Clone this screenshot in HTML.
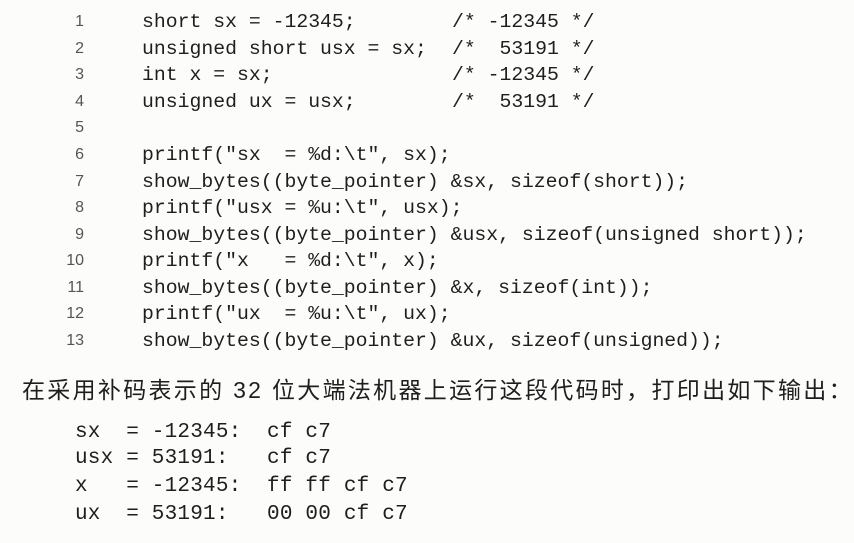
<!DOCTYPE html>
<html><head><meta charset="utf-8"><style>
html,body{margin:0;padding:0;width:854px;height:543px;background:#fcfcfb;overflow:hidden;position:relative}
.l{position:absolute;white-space:pre;font-family:"Liberation Mono",monospace;font-size:19.8px;color:#1e1e1e;line-height:24px}
.n{position:absolute;font-family:"Liberation Sans",sans-serif;font-size:16px;color:#555;width:30px;text-align:right;line-height:24px}
.c{position:absolute;left:452px;white-space:pre;font-family:"Liberation Mono",monospace;font-size:19.8px;color:#1e1e1e;line-height:24px}
.o{position:absolute;left:75px;white-space:pre;font-family:"Liberation Mono",monospace;font-size:21px;color:#1e1e1e;line-height:24px;letter-spacing:0.2px}
.zh{position:absolute;left:22px;top:376px;white-space:pre;font-family:"Liberation Sans","Noto Sans CJK SC",sans-serif;font-size:23px;letter-spacing:2.3px;color:#1e1e1e;line-height:28px}
</style></head><body>
<div class="n" style="left:54px;top:10px">1</div><div class="l" style="left:142px;top:10px">short sx = -12345;</div><div class="c" style="top:10px">/* -12345 */</div>
<div class="n" style="left:54px;top:37px">2</div><div class="l" style="left:142px;top:37px">unsigned short usx = sx;</div><div class="c" style="top:37px">/*  53191 */</div>
<div class="n" style="left:54px;top:63px">3</div><div class="l" style="left:142px;top:63px">int x = sx;</div><div class="c" style="top:63px">/* -12345 */</div>
<div class="n" style="left:54px;top:90px">4</div><div class="l" style="left:142px;top:90px">unsigned ux = usx;</div><div class="c" style="top:90px">/*  53191 */</div>
<div class="n" style="left:54px;top:116px">5</div>
<div class="n" style="left:54px;top:143px">6</div><div class="l" style="left:142px;top:143px">printf("sx  = %d:\t", sx);</div>
<div class="n" style="left:54px;top:170px">7</div><div class="l" style="left:142px;top:170px">show_bytes((byte_pointer) &amp;sx, sizeof(short));</div>
<div class="n" style="left:54px;top:196px">8</div><div class="l" style="left:142px;top:196px">printf("usx = %u:\t", usx);</div>
<div class="n" style="left:54px;top:223px">9</div><div class="l" style="left:142px;top:223px">show_bytes((byte_pointer) &amp;usx, sizeof(unsigned short));</div>
<div class="n" style="left:54px;top:249px">10</div><div class="l" style="left:142px;top:249px">printf("x   = %d:\t", x);</div>
<div class="n" style="left:54px;top:276px">11</div><div class="l" style="left:142px;top:276px">show_bytes((byte_pointer) &amp;x, sizeof(int));</div>
<div class="n" style="left:54px;top:302px">12</div><div class="l" style="left:142px;top:302px">printf("ux  = %u:\t", ux);</div>
<div class="n" style="left:54px;top:329px">13</div><div class="l" style="left:142px;top:329px">show_bytes((byte_pointer) &amp;ux, sizeof(unsigned));</div>
<div class="zh">在采用补码表示的 32 位大端法机器上运行这段代码时，打印出如下输出：</div>
<div class="o" style="top:421px">sx  = -12345:  cf c7</div>
<div class="o" style="top:447px">usx = 53191:   cf c7</div>
<div class="o" style="top:475px">x   = -12345:  ff ff cf c7</div>
<div class="o" style="top:503px">ux  = 53191:   00 00 cf c7</div>
</body></html>
